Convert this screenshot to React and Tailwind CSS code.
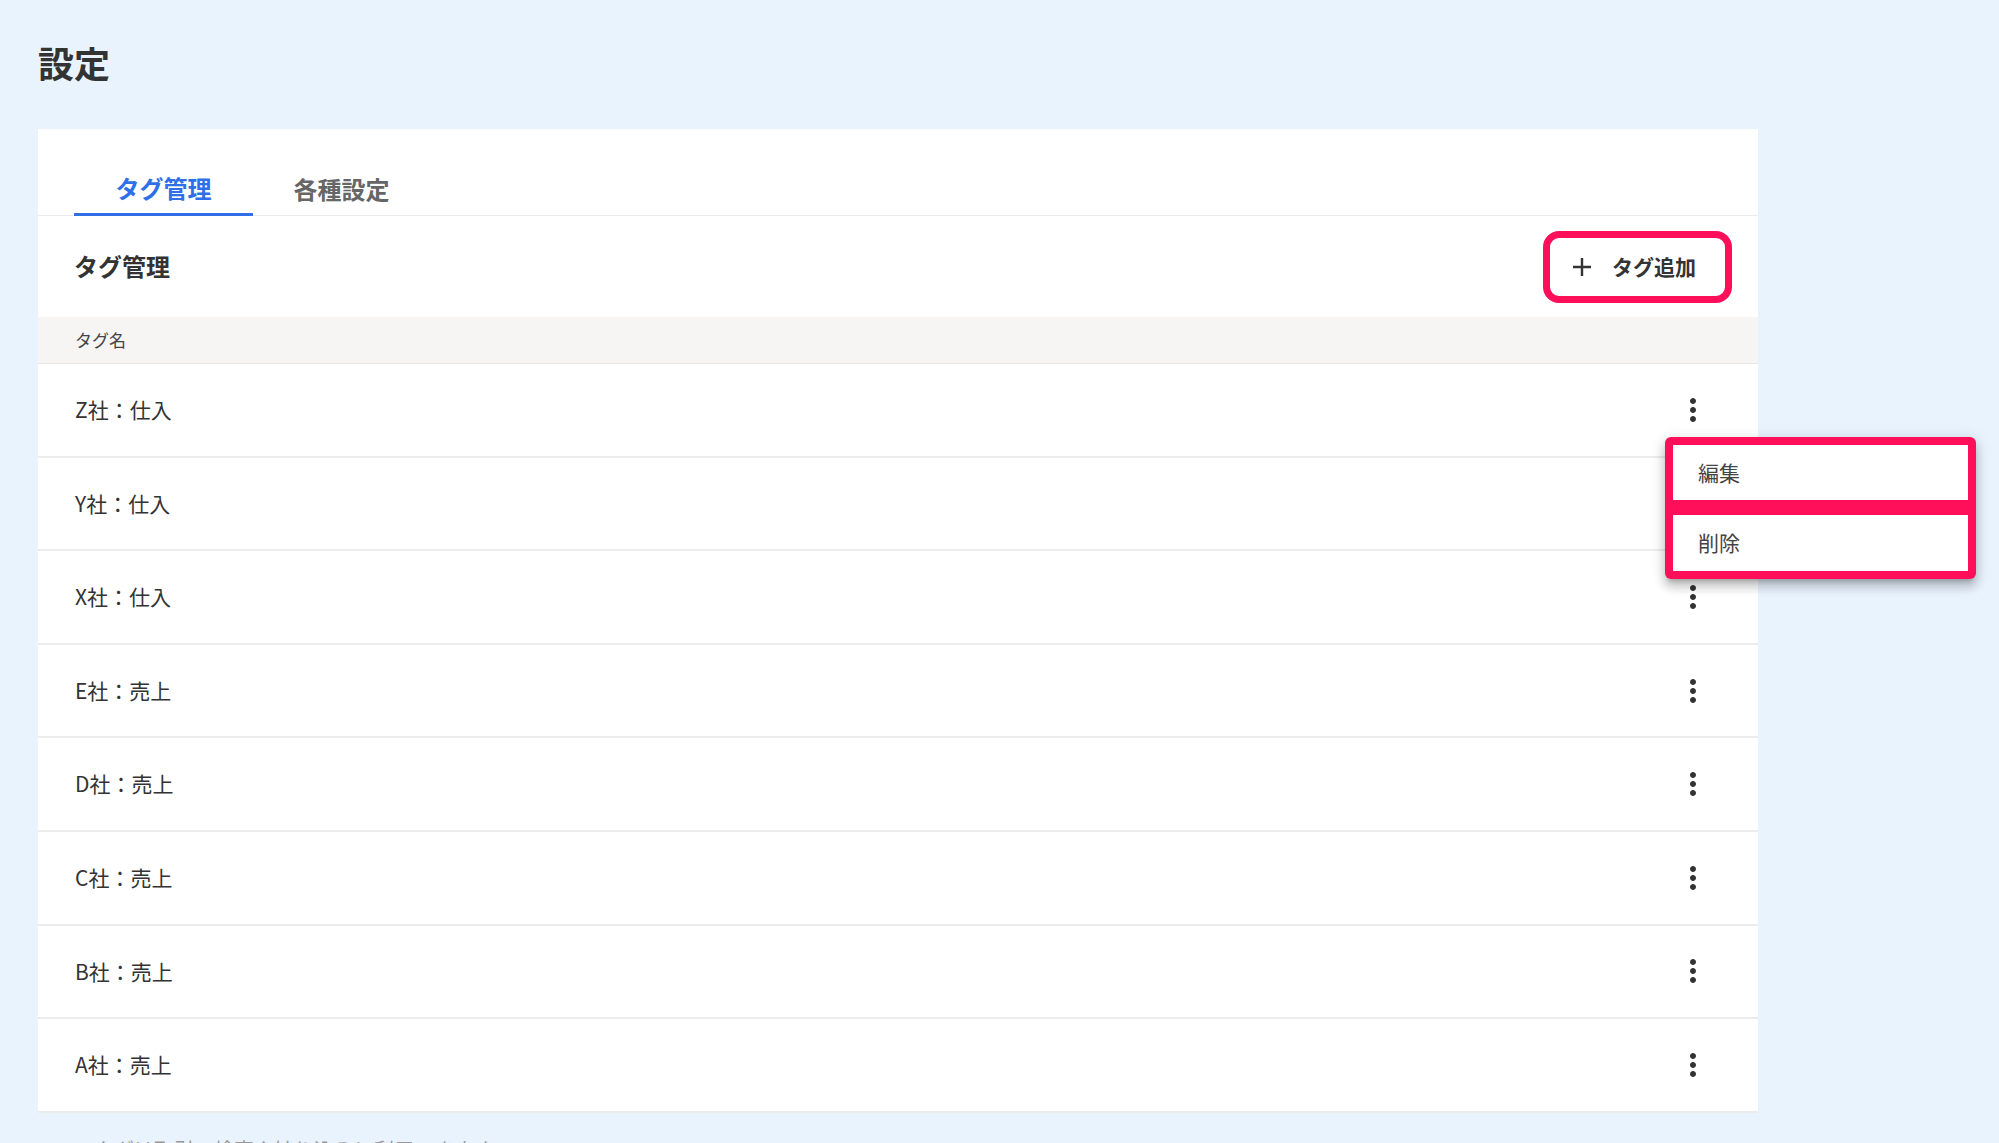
import React from 'react';

const tags = ['Z社：仕入', 'Y社：仕入', 'X社：仕入', 'E社：売上', 'D社：売上', 'C社：売上', 'B社：売上', 'A社：売上'];

const MoreVert = () => (
  <svg width="36" height="36" viewBox="0 0 24 24" fill="#333333">
    <path d="M12 8c1.1 0 2-.9 2-2s-.9-2-2-2-2 .9-2 2 .9 2 2 2zm0 2c-1.1 0-2 .9-2 2s.9 2 2 2 2-.9 2-2-.9-2-2-2zm0 6c-1.1 0-2 .9-2 2s.9 2 2 2 2-.9 2-2-.9-2-2-2z" />
  </svg>
);

const Plus = () => (
  <svg width="20" height="20" viewBox="0 0 20 20" fill="none" stroke="#333333" strokeWidth="2.4">
    <path d="M10 1v18M1 10h18" />
  </svg>
);

export default function App() {
  return (
    <div
      className="relative min-h-[1143px] overflow-hidden bg-[#e9f3fd] px-[38px] pt-[35px] text-[#333333]"
      style={{ fontFamily: '"Noto Sans CJK JP", "Noto Sans", sans-serif' }}
    >
      <h1 className="text-[36px] font-bold leading-[54px] text-[#333333]">設定</h1>

      <div className="mt-[40px] w-[1720px] bg-white pt-[33px]">
        {/* tabs */}
        <div className="flex border-b border-[#ececec] pl-[36px]">
          <button className="-mb-px flex h-[54px] w-[179px] items-center justify-center border-b-[3px] border-[#2f6fe8] pt-[1px] text-[24px] font-bold text-[#2f6fe8]">
            タグ管理
          </button>
          <button className="flex h-[53px] w-[177px] items-center justify-center text-[24px] font-bold text-[#666666]">
            各種設定
          </button>
        </div>

        <div className="flex h-[101px] items-center justify-between pl-[36px] pr-[26px]">
          <h2 className="pb-[1px] text-[24px] font-bold leading-none text-[#333333]">タグ管理</h2>
          <button className="flex h-[72px] w-[189px] items-center gap-[20px] rounded-[16px] border-[7px] border-[#ff0f5a] pl-[22px] text-[21px] font-bold text-[#333333]">
            <Plus />
            <span>タグ追加</span>
          </button>
        </div>

        <div className="flex h-[47px] items-center border-b border-[#e6e6e6] bg-[#f6f5f4] pl-[37px] text-[17px] text-[#444444]">
          タグ名
        </div>

        {tags.map((t) => (
          <div
            key={t}
            className="flex h-[93.6px] items-center justify-between border-b-2 border-[#ececec] pl-[37px] pr-[47px]"
          >
            <span className="text-[21px] text-[#333333]">{t}</span>
            <MoreVert />
          </div>
        ))}
      </div>

      <p className="mt-[22px] pl-[36px] text-[20px] leading-[30px] text-[#999999]">
        ※タグは取引の検索や絞り込みに利用できます。
      </p>

      {/* row menu */}
      <div className="absolute left-[1665px] top-[437px] flex w-[311px] flex-col gap-[15px] rounded-[6px] bg-[#ff0f5a] p-[8px] shadow-[0_5px_5px_-3px_rgba(0,0,0,0.2),0_8px_10px_1px_rgba(0,0,0,0.14),0_3px_14px_2px_rgba(0,0,0,0.12)]">
        <div className="flex h-[55px] items-center bg-white pl-[25px] text-[21px] text-[#444444]">編集</div>
        <div className="flex h-[56px] items-center bg-white pl-[25px] text-[21px] text-[#444444]">削除</div>
      </div>
    </div>
  );
}
